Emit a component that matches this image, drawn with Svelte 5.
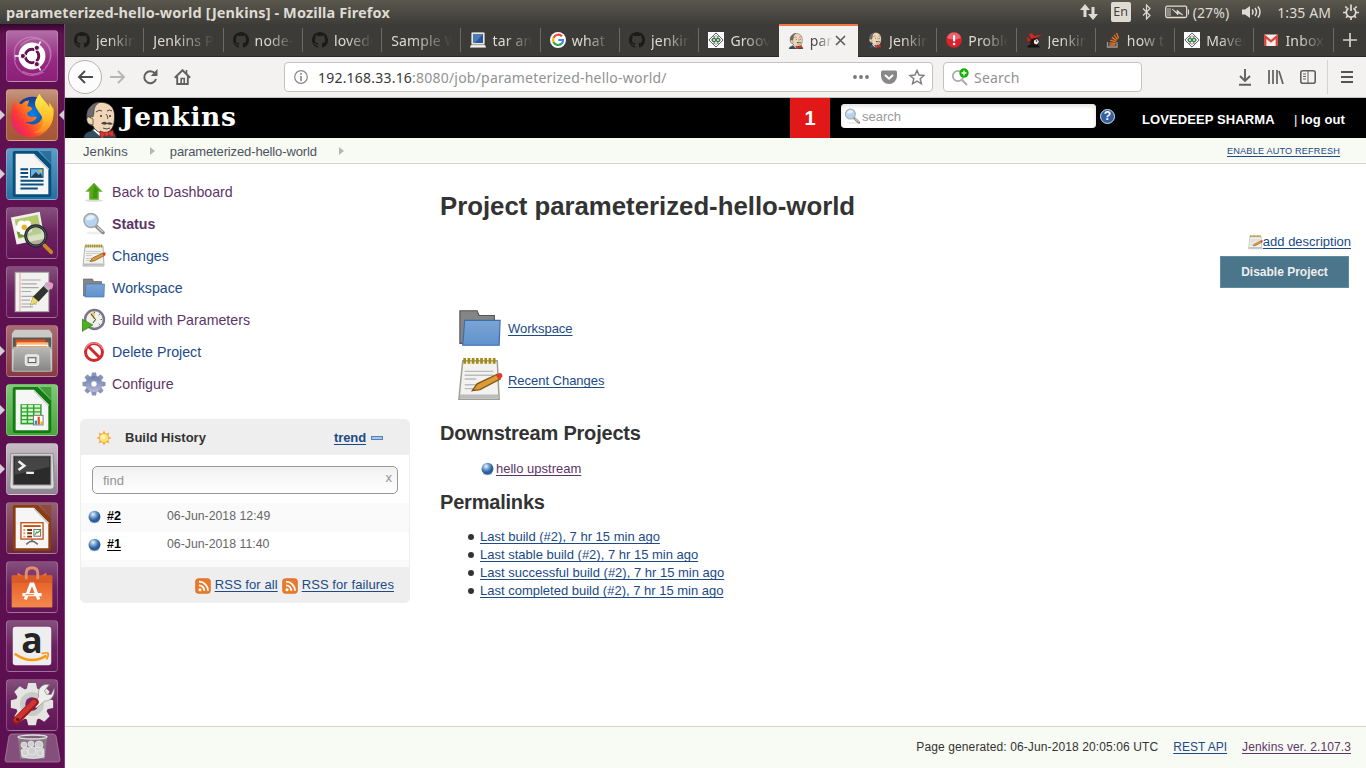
<script>
  const tabs = [
    { icon: 'github', text: 'jenkins' },
    { icon: '', text: 'Jenkins Pi' },
    { icon: 'github', text: 'node-js' },
    { icon: 'github', text: 'lovede' },
    { icon: '', text: 'Sample Wo' },
    { icon: 'screen', text: 'tar and' },
    { icon: 'google', text: 'what is' },
    { icon: 'github', text: 'jenkins' },
    { icon: 'diamond', text: 'Groovy' },
    { icon: 'butler', text: 'para', active: true },
    { icon: 'butler', text: 'Jenkins' },
    { icon: 'alert', text: 'Proble' },
    { icon: 'ninja', text: 'Jenkins' },
    { icon: 'stack', text: 'how to' },
    { icon: 'diamond', text: 'Maven' },
    { icon: 'gmail', text: 'Inbox (' }
  ];
  const apps = [
    { id: 'ubuntu' },
    { id: 'firefox', run: true, focus: true },
    { id: 'writer', run: true },
    { id: 'viewer' },
    { id: 'gedit' },
    { id: 'files', run: true },
    { id: 'calc', run: true },
    { id: 'term', run: true },
    { id: 'impress' },
    { id: 'store' },
    { id: 'amazon' },
    { id: 'settings' }
  ];
  const tasks = [
    { icon: 'up', text: 'Back to Dashboard', seen: true },
    { icon: 'search', text: 'Status', seen: true, bold: true },
    { icon: 'notepad', text: 'Changes' },
    { icon: 'folder', text: 'Workspace' },
    { icon: 'clock', text: 'Build with Parameters', seen: true },
    { icon: 'stop', text: 'Delete Project' },
    { icon: 'gear', text: 'Configure', seen: true }
  ];
  const builds = [
    { n: '#2', t: '06-Jun-2018 12:49' },
    { n: '#1', t: '06-Jun-2018 11:40' }
  ];
  const links = ['build', 'stable build', 'successful build', 'completed build'];
  const teeth = [0, 45, 90, 135, 180, 225, 270, 315];
</script>

{#snippet butler()}
  <svg viewBox="0 0 34 37" class="fill">
    <path d="M1 37c0-4 3-6 7-7l3-3h13l3 3c4 1 6 3 6 7z" fill="#335061" stroke="#1b2a33" stroke-width=".6" />
    <path d="M10 29l6-3 8 0 1 6-6 5z" fill="#fff" />
    <path d="M7 24C2 20 3 9 8 5c5-5 15-5 20 0 4 4 4 10 3 17-1 6-5 10-10 10-6 0-9-3-11-7z" fill="#f0d6b7" stroke="#222" stroke-width=".8" />
    <path d="M7 22C2 17 3 9 8 5c3-3 6-4 9-4-5 3-6 6-6 11l-1 4-2-1z" fill="#6d6b6d" stroke="#222" stroke-width=".5" />
    <path d="M6 16c-3-1-3 5 0 7l4 1 0-6z" fill="#f0d6b7" stroke="#222" stroke-width=".6" />
    <path d="M13 11q3-3 6-1M24 10q3-2 5 0M23 13q3 4 1 5M20 27q4 2 7 0" fill="none" stroke="#222" stroke-width=".8" />
    <path d="M18 22.500q3-3 6-.5 3-2 6 1-3 1.500-6 0-3 1.500-6-.5z" fill="#444" />
    <circle cx="18" cy="15" r=".9" fill="#222" /><circle cx="27" cy="15" r=".9" fill="#222" />
    <path d="M17 30l6 2 7-3 1 7-7-2-7 3z" fill="#d33833" stroke="#701c1a" stroke-width=".7" />
    <rect x="22" y="31" width="3.5" height="4" fill="#ef3d3a" stroke="#701c1a" stroke-width=".5" />
  </svg>
{/snippet}

{#snippet favicon(id)}
  {#if id === 'butler'}
    {@render butler()}
  {:else}
    <svg viewBox="0 0 16 16" class="fill">
      {#if id === 'github'}
        <path fill="#1c1b1a" d="M8 0C3.58 0 0 3.58 0 8c0 3.54 2.29 6.53 5.47 7.59.4.07.55-.17.55-.38v-1.49c-2.01.37-2.53-.49-2.69-.94-.09-.23-.48-.94-.82-1.13-.28-.15-.68-.52-.01-.53.63-.01 1.08.58 1.23.82.72 1.21 1.87.87 2.33.66.07-.52.28-.87.51-1.07-1.78-.2-3.64-.89-3.64-3.95 0-.87.31-1.59.82-2.15-.08-.2-.36-1.02.08-2.12 0 0 .67-.21 2.2.82a7.6 7.6 0 0 1 4 0c1.53-1.04 2.2-.82 2.2-.82.44 1.1.16 1.92.08 2.12.51.56.82 1.27.82 2.15 0 3.07-1.87 3.75-3.65 3.95.29.25.54.73.54 1.48v2.2c0 .21.15.46.55.38A8 8 0 0 0 16 8c0-4.42-3.58-8-8-8z" />
      {:else if id === 'screen'}
        <rect x="1.5" y=".5" width="13" height="12" rx="1" fill="#e9e6dc" stroke="#b9b6aa" stroke-width=".6" />
        <rect x="3" y="2" width="10" height="9" fill="#2a5596" /><path d="M3 2h10l-8 9H3z" fill="#4a7bba" />
        <path d="M1 13h14l1 2.5H0z" fill="#f5f4ef" stroke="#aaa" stroke-width=".5" />
      {:else if id === 'google'}
        <circle cx="8" cy="8" r="8" fill="#fff" />
        <path d="M12 4.4A5 5 0 0 0 3.6 5.8" fill="none" stroke="#ea4335" stroke-width="2.2" />
        <path d="M3.6 5.6a5 5 0 0 0 0 4.6" fill="none" stroke="#fbbc05" stroke-width="2.2" />
        <path d="M3.5 10a5 5 0 0 0 8 1.6" fill="none" stroke="#34a853" stroke-width="2.2" />
        <path d="M11.5 11.8A5 5 0 0 0 13 8H8.3" fill="none" stroke="#4285f4" stroke-width="2.1" />
      {:else if id === 'diamond'}
        <rect width="16" height="16" fill="#fff" />
        <path d="M8 .9L15.1 8 8 15.1.9 8z" fill="#fff" stroke="#444" stroke-width=".9" />
        <path d="M8 3.2L12.8 8 8 12.8 3.2 8z" fill="#dfe9df" stroke="#777" stroke-width=".5" />
        <circle cx="6" cy="8" r="1.7" fill="none" stroke="#397a49" stroke-width="1.2" /><circle cx="10" cy="8" r="1.7" fill="none" stroke="#397a49" stroke-width="1.2" />
        <path d="M5.500 4.500l1.500.8M10.500 4.500l-1.500.8M5.500 11.500l1.500-.8M10.500 11.500l-1.500-.8" stroke="#333" stroke-width=".8" />
      {:else if id === 'alert'}
        <circle cx="8" cy="8" r="7.8" fill="#d8232e" /><path d="M1 6a7.2 7.2 0 0 1 14 0q-7 3-14 0z" fill="#e9636a" />
        <rect x="7" y="3" width="2.2" height="6.5" rx="1" fill="#fff" /><circle cx="8.1" cy="12" r="1.3" fill="#fff" />
      {:else if id === 'ninja'}
        <path d="M1 15.500c1-2 3-3.500 5-3.500l6 1 2 2.500z" fill="#151312" />
        <path d="M4 6l5-2 4 4-1 5-5 1-4-4z" fill="#2a1512" />
        <path d="M3 2l3-1 2 3 8-1.500-5 3L5 7z" fill="#cc2b24" />
        <path d="M1 5l4 2-1 3-3-1z" fill="#b5261f" />
        <path d="M8 8.500l3-1.500 2 2.500-2 3-3-1z" fill="#f2eeea" /><circle cx="10.500" cy="9" r=".8" fill="#222" />
      {:else if id === 'stack'}
        <path d="M2.5 10v5h9.5v-5" fill="none" stroke="#9d9a96" stroke-width="1.3" />
        <path d="M4.3 13h6M4.5 10.8l6 .7M5.2 8.2l5.6 1.7M6.8 5.4l4.8 3.2M9 2.9l3.6 4.5M11.6 1l2 5.3" stroke="#e87423" stroke-width="1.3" />
      {:else if id === 'gmail'}
        <rect x="1" y="2.5" width="14" height="11.5" rx="1" fill="#f1eeec" />
        <path d="M2.2 14V4.4L8 9.3l5.8-4.9V14" fill="none" stroke="#db4437" stroke-width="2.3" />
      {/if}
    </svg>
  {/if}
{/snippet}

{#snippet app(id)}
  <svg viewBox="0 0 52 52" class="fill">
    {#if id === 'ubuntu'}
      <g fill="none" stroke="#d99bc9" stroke-opacity=".55" stroke-width="1.2">
        <path d="M9 30C3 12 20 3 34 8S49 28 40 38M14 15C30 0 47 12 45 27S30 49 16 42M38 43C20 52 5 40 8 22" />
      </g>
      <circle cx="26" cy="26" r="14" fill="#fff" />
      <circle cx="26" cy="26" r="7" fill="none" stroke="#65144f" stroke-width="3.2" />
      <path d="M26 26L35 11M26 26L35 41M26 26H8" stroke="#fff" stroke-width="1.6" />
      <circle cx="26" cy="26" r="5.5" fill="#fff" />
      <g fill="#65144f" stroke="#fff" stroke-width="1"><circle cx="16.5" cy="26" r="2.7" /><circle cx="31" cy="17.5" r="2.7" /><circle cx="31" cy="34.5" r="2.7" /></g>
    {:else if id === 'firefox'}
      <circle cx="26.500" cy="25" r="18" fill="url(#ffBlue)" />
      <path d="M10 8l-2 6c3-1 6 0 7 1 3-3 5-4 8-4l-2 6c3 0 5 1 5 3-1 2-5 2-5 5 2 5 7 2 10 3-2 5-8 6-12 5 8 6 17 2 18-7l11-8c3 14-7 31-22 31C10 49 2 36 5 22c0-5 2-11 5-14z" fill="url(#ffOrange)" />
      <path d="M34 4c-4 5-6 9-4 14 3 6 9 10 7 17-1 5-5 8-10 9 13 3 21-7 21-18 0-6-1-9-4-13l0 5c-3-6-8-8-10-14z" fill="url(#ffTail)" />
    {:else if id === 'writer' || id === 'calc' || id === 'impress'}
      {@const col = id === 'writer' ? '#07507d' : id === 'calc' ? '#147b13' : '#8c3d10'}
      <path d="M8 2h24l14 14v31q0 3-3 3H9q-3 0-3-3V4q0-2 2-2z" fill={col} />
      <path d="M34 2h12v13z" fill={col} opacity=".55" />
      <path d="M9 5h19l15 15v27H9z" fill="#f6f6f6" /><path d="M28 5v2l15 15v-2z" fill="#c6cbd0" />
      {#if id === 'writer'}
        <path d="M14 21h8M14 25h8M14 29h8M14 33h24M14 37h24M14 41h18" stroke="#08507f" stroke-width="2" />
        <rect x="24.500" y="20.500" width="13" height="9" fill="#68b5e4" stroke="#084c78" /><path d="M25 29l5-5 3 3 2-2 2 4z" fill="#2b3b49" /><circle cx="35" cy="23" r="1.5" fill="#f2b52f" />
      {:else if id === 'calc'}
        <rect x="14" y="20" width="22" height="21" fill="#2fa02c" /><path d="M15.500 22h5M22 22h5M28.500 22h6M15.500 26h5M22 26h5M28.500 26h6M15.500 30h5M22 30h5M28.500 30h6M15.500 34h5M22 34h5M15.500 38h5M22 38h5" stroke="#d5f5cd" stroke-width="2.6" />
        <rect x="27.500" y="31.500" width="10" height="10" fill="#fff" stroke="#777" /><path d="M30 41v-4" stroke="#1795e6" stroke-width="2.4" /><path d="M33 41v-8" stroke="#e05a17" stroke-width="2.400" /><path d="M36 41v-3" stroke="#e8b20c" stroke-width="2.400" />
      {:else}
        <rect x="14.500" y="20.500" width="23" height="17" fill="#fff" stroke="#c25017" stroke-width="1.4" />
        <path d="M17 24h18" stroke="#c25017" stroke-width="2" /><path d="M17 28h2M17 31.500h2M17 35h2" stroke="#e99562" stroke-width="2" /><path d="M21 28h5M21 31.500h5M21 35h5" stroke="#7d3410" stroke-width="2" />
        <rect x="28" y="27.500" width="7" height="7" fill="#fff" stroke="#666" /><path d="M29 33l2-3 1 1 3-3" fill="none" stroke="#34a821" stroke-width="1.200" /><path d="M26 38v2m-6 3l4-3h4l4 3" fill="none" stroke="#666" stroke-width="1.600" />
      {/if}
    {:else if id === 'viewer'}
      <path d="M4 10l30-6 5 28-29 6z" fill="#f0efe9" /><path d="M8 12l24-5 4 20-24 5z" fill="#b5c96a" /><path d="M10 24l25-5 1 7-24 5z" fill="#6e9a35" />
      <g fill="#fff"><circle cx="15" cy="17" r="4" /><circle cx="21" cy="17" r="4" /><circle cx="13" cy="21" r="4" /><circle cx="17" cy="24" r="4" /><circle cx="22" cy="22" r="4" /></g><circle cx="18" cy="20" r="2.800" fill="#e7b61f" />
      <circle cx="30" cy="29" r="10.500" fill="#d0dcb6" fill-opacity=".75" stroke="#20242a" stroke-width="3" /><circle cx="30" cy="29" r="10.500" fill="none" stroke="#7b8386" stroke-width=".6" />
      <path d="M39 39l7 7" stroke="#c98724" stroke-width="4" stroke-linecap="round" />
    {:else if id === 'gedit'}
      <rect x="8.500" y="5.500" width="35" height="41" fill="#f1f1ef" stroke="#a5a5a1" /><path d="M13.500 6v40" stroke="#e7a0a0" /><path d="M15 13.500h20M15 17.500h16M15 21.500h18M15 25.500h10M15 30.500h14M15 34.500h9M15 38.500h16M15 41.500h12" stroke="#aaa" stroke-width="1.200" />
      <path d="M24 40l3-9L40 18l5 5-12 13z" fill="#31332f" /><path d="M24 40l3-9 6 5z" fill="#e9d86c" /><path d="M38 20l4-4 5 5-4 4z" fill="#bdbdbd" /><path d="M41 17q3-1 6 1 0 3-1 4z" fill="#e29ac6" stroke="#e29ac6" stroke-width="2" />
    {:else if id === 'files'}
      <path d="M8 4h36l3 4v39H5V8z" fill="#c9c9c6" /><path d="M6 12h40v12H6z" fill="#585854" /><path d="M9 14h31v7H9z" fill="#d94f1f" /><path d="M10 17h33v4H10z" fill="#f6b674" /><path d="M10 19.500h33v3H10z" fill="#fff" /><path d="M11 21h31v3H11z" fill="#e8772c" />
      <path d="M7 22h38l1 25H6z" fill="url(#grey)" stroke="#d0d0ce" stroke-width=".7" /><rect x="19" y="30" width="14" height="11" rx="2" fill="#ddd" stroke="#f8f8f8" /><rect x="22" y="33" width="8" height="5" fill="#eee" stroke="#555" />
    {:else if id === 'term'}
      <path d="M4 10h44l1 34q0 3-3 3H6q-3 0-3-3z" fill="#ddd" stroke="#8a858a" /><rect x="6.500" y="12.500" width="39" height="30" fill="#2b2b2b" stroke="#777" /><path d="M8 14h36v10L8 32z" fill="#454545" />
      <path d="M12 18l6 4.500-6 4.500" fill="none" stroke="#f0f0f0" stroke-width="2.600" /><path d="M20 30h8" stroke="#f0f0f0" stroke-width="2.400" />
    {:else if id === 'store'}
      <path d="M5 14h6V11l5 3h20l5-3v3h6v33H5z" fill="#ee7335" /><path d="M5 14h42v8H5z" fill="#d95b28" /><path d="M5 22h42v25H5z" fill="url(#orange)" />
      <path d="M20 18v-6q0-6 6-6t6 6v6" fill="none" stroke="#e58c6c" stroke-width="3" /><path d="M19 39l6-16h2l6 16M16 34h20" fill="none" stroke="#fff" stroke-width="3.300" /><path d="M19 34h9" stroke="#ee7335" stroke-width="1" />
    {:else if id === 'amazon'}
      <rect x="6" y="6" width="40" height="40" rx="3" fill="#eee" />
      <text x="26" y="33" text-anchor="middle" font-family="Open Sans" font-weight="700" font-size="37" fill="#242424">a</text>
      <path d="M8 34q17 12 33 2" fill="none" stroke="#f79a12" stroke-width="2.500" /><path d="M36 34q6-2 7 0 0 3-2 6" fill="none" stroke="#f79a12" stroke-width="1.800" />
    {:else if id === 'settings'}
      <g fill="#e4e4e2"><circle cx="26" cy="25" r="17" />{#each teeth as a}<path d="M22 3h8l2 9H20z" transform="rotate({a} 26 25)" />{/each}</g>
      <circle cx="26" cy="25" r="12.500" fill="#cacac8" /><circle cx="26" cy="25" r="7" fill="#77246a" />
      <path d="M28 27l5-10C31 9 37 3 44 5l-5 6 2 4 5 0 3-6c1 8-4 13-10 13l-8 7z" fill="#eeeeec" stroke="#8c8c8c" stroke-width=".7" />
      <path d="M10 42L29 23" stroke="#9e1a1a" stroke-width="8" stroke-linecap="round" /><path d="M10 41L28 23" stroke="#cf3530" stroke-width="5" stroke-linecap="round" />
      <circle cx="11" cy="41" r="1.700" fill="#5d1717" />
    {/if}
  </svg>
{/snippet}

{#snippet icon(id)}
  <svg viewBox="0 0 24 24" class="fill">
    {#if id === 'up'}
      <ellipse cx="12" cy="20.500" rx="9" ry="1.500" fill="#ddd" /><path d="M12 3l8 8.500h-3.500v8h-9v-8H4z" fill="#57a81e" stroke="#7dbb50" stroke-width=".8" /><path d="M12 5l5 6h-2v7h-4z" fill="#3f9705" />
    {:else if id === 'search'}
      <ellipse cx="13" cy="21" rx="9" ry="1.500" fill="#eee" /><path d="M14 14l7 6.500" stroke="#888" stroke-width="3.600" stroke-linecap="round" /><path d="M15 14.500l6 5.500" stroke="#ccc" stroke-width="1.500" />
      <circle cx="9" cy="8.500" r="7" fill="#b7d3f2" stroke="#a5a8a5" stroke-width="1.500" /><path d="M4 8a5 5 0 0 1 9-3q-3 4-9 3z" fill="#e3effb" />
    {:else if id === 'notepad'}
      <path d="M3 2h18l1 20H1z" fill="#f2f2f0" stroke="#a0a09a" stroke-width=".8" /><path d="M1.500 20.500h20" stroke="#bbb" stroke-width="2" /><path d="M4 .5v3M6.200 .5v3M8.400 .5v3M10.600 .5v3M12.800 .5v3M15 .5v3M17.200 .5v3M19.400 .5v3" stroke="#a38a12" stroke-width="1.400" />
      <path d="M4 7.500h15M4 9.500h15M4 11.500h6M4 14.500h8M4 16.500h5" stroke="#bbb" stroke-width=".7" />
      <path d="M8 17.500l2.500-3.500L21 9l1.500 2.500L12 17z" fill="#dd9b35" stroke="#7e5515" stroke-width=".7" /><path d="M20.300 9.300l2-1q1.500 0 1.400 2L21.800 12z" fill="#dc3a2c" />
    {:else if id === 'folder'}
      <path d="M1.500 3h9l1 2.500h8V20h-18z" fill="#858585" stroke="#555" stroke-width=".6" /><path d="M4 8h18.500L22 21H3z" fill="url(#folder)" stroke="#3a6eb0" stroke-width=".6" />
    {:else if id === 'clock'}
      <circle cx="12.500" cy="11.500" r="9.500" fill="#f1f1e9" stroke="#75768a" stroke-width="2.400" /><path d="M12 12L8 5l5-1z" fill="#e8c85b" /><path d="M9 6l4.500 5.500L11 15" fill="none" stroke="#333" /><path d="M12.500 3.500v1.500M20 11.500h-1.500M17.800 6.200l-1 1M17.800 16.800l-1-1" stroke="#666" /><path d="M0 11l11 6-11 6.500z" fill="#4fae24" stroke="#2f7d12" stroke-width=".6" />
    {:else if id === 'stop'}
      <circle cx="12" cy="12" r="8.500" fill="#fff" stroke="#d2292f" stroke-width="3" /><path d="M6 6l12 12" stroke="#d2292f" stroke-width="3" /><path d="M3.500 9a9 9 0 0 1 17 0" fill="none" stroke="#ec7f80" stroke-width="1.500" />
    {:else if id === 'gear'}
      <g>{#each teeth as a}<path d="M10 .5h4l1 5H9z" fill="#8a94bb" transform="rotate({a} 12 12)" />{/each}</g><circle cx="12" cy="12" r="8" fill="url(#gear)" /><circle cx="12" cy="12" r="3.200" fill="#fff" stroke="#7d83a8" stroke-width=".7" />
    {:else if id === 'ball'}
      <ellipse cx="12" cy="21" rx="9" ry="2.500" fill="#d5d5d5" /><circle cx="12" cy="11.500" r="11" fill="url(#ball)" />
    {:else if id === 'rss'}
      <rect x="1" y="1" width="22" height="22" rx="4" fill="#ec7a2b" stroke="#d05e1a" /><path d="M6 11a8 8 0 0 1 8 8M6 5.500A13.500 13.500 0 0 1 19.500 19" fill="none" stroke="#fff" stroke-width="2.800" /><circle cx="7.500" cy="17.500" r="2.300" fill="#fff" />
    {:else if id === 'sun'}
      {#each teeth as a}<path d="M12 .5l2 5h-4z" fill="#f3a232" transform="rotate({a} 12 12)" />{/each}<circle cx="12" cy="12" r="7" fill="#fde36f" stroke="#f0a437" stroke-width="1.200" /><circle cx="10.500" cy="10.500" r="3.500" fill="#fff5b5" />
    {/if}
  </svg>
{/snippet}

<svg width="0" height="0" class="defs">
  <defs>
    <radialGradient id="ffBlue"><stop offset="0" stop-color="#0a84e8" /><stop offset="1" stop-color="#143b91" /></radialGradient>
    <linearGradient id="ffOrange" x1="1" x2="0" y1=".2" y2=".9"><stop offset="0" stop-color="#ffd42e" /><stop offset=".4" stop-color="#ff8a18" /><stop offset=".7" stop-color="#fc3838" /><stop offset="1" stop-color="#e0158d" /></linearGradient>
    <linearGradient id="ffTail" x2="0" y2="1"><stop offset="0" stop-color="#fff04a" /><stop offset=".6" stop-color="#ffc02e" /><stop offset="1" stop-color="#ff8420" /></linearGradient>
    <linearGradient id="grey" x2="0" y2="1"><stop offset="0" stop-color="#b9b9b7" /><stop offset="1" stop-color="#858583" /></linearGradient>
    <linearGradient id="orange" x2="0" y2="1"><stop offset="0" stop-color="#e8652b" /><stop offset="1" stop-color="#f4894d" /></linearGradient>
    <linearGradient id="folder" x2="0" y2="1"><stop offset="0" stop-color="#7ca4d5" /><stop offset="1" stop-color="#5f92cc" /></linearGradient>
    <linearGradient id="gear" x2="0" y2="1"><stop offset="0" stop-color="#6a7da8" /><stop offset="1" stop-color="#b9b7d8" /></linearGradient>
    <radialGradient id="ball" cx=".38" cy=".3"><stop offset="0" stop-color="#eef5fb" /><stop offset=".5" stop-color="#7ba5d2" /><stop offset="1" stop-color="#2a5e9e" /></radialGradient>
  </defs>
</svg>

<div class="desktop">
  <header class="panel">
    <span class="title">parameterized-hello-world [Jenkins] - Mozilla Firefox</span>
    <div class="tray">
      <svg class="net" width="18" height="16"><path d="M5 13V5M13 3v8" stroke="#dfdbd2" stroke-width="3" /><path d="M0 6l5-6 5 6zM8 10l5 6 5-6z" fill="#dfdbd2" /></svg>
      <span class="lang">En</span>
      <svg class="bt" width="10" height="16"><path d="M1 4.500l7 7-3.500 3.500V1L8 4.500l-7 7" fill="none" stroke="#dfdbd2" stroke-width="1.200" /></svg>
      <svg class="bat" width="25" height="14"><rect x=".7" y="1.200" width="21" height="11.300" rx="1.500" fill="none" stroke="#dfdbd2" stroke-width="1.300" /><rect x="2" y="3" width="4" height="8" fill="#8b8880" /><path d="M23 4.500h1v5h-1z" fill="#dfdbd2" /><path d="M7 4l5 3.500V5L18 10l-5-2v2z" fill="#dfdbd2" stroke="#dfdbd2" stroke-width=".6" /></svg>
      <span class="pct">(27%)</span>
      <svg class="vol" width="20" height="16"><path d="M0 5.500h3L8 2v12L3 10.500H0z" fill="#dfdbd2" /><path d="M10 5.500q2 2.500 0 5M13 4q3 4 0 8M16 2.500q4 5.500 0 11" fill="none" stroke="#dfdbd2" stroke-width="1.500" /></svg>
      <span class="time">1:35 AM</span>
      <svg class="cog" width="16" height="16" viewBox="0 0 16 16"><path d="M5.500 4.300a4.800 4.800 0 1 0 5 0M8 .5v6.500" fill="none" stroke="#dfdbd2" stroke-width="1.700" /><path d="M4 4.200L2.300 2.500M12 4.200l1.700-1.700M3.500 8.500H0M16 8.500h-3.500M4.800 11.700l-1.800 2M11.200 11.700l1.800 2M8 13v3" stroke="#dfdbd2" stroke-width="1.700" /></svg>
    </div>
  </header>

  <div class="screen">
    <nav class="launcher">
      {#each apps as a}
        <div class="app {a.id}">
          {#if a.run}<i class="run"></i>{/if}
          {@render app(a.id)}
          {#if a.focus}<i class="focus"></i>{/if}
        </div>
      {/each}
      <svg class="trash" width="57" height="30" viewBox="0 0 57 30"><path d="M8 1h41q2 0 3 2l4 24q0 2-2 2H3q-2 0-2-2L5 3q1-2 3-2z" fill="#84507b" stroke="#a87ca1" stroke-width=".8" /><path d="M14 4h29l-2 22H16z" fill="#8e878e" fill-opacity=".7" /><ellipse cx="28.500" cy="4" rx="14.500" ry="2" fill="#776572" stroke="#dedede" stroke-width="1.300" /><g fill="#cfcfcf" stroke="#eee" stroke-width=".7"><circle cx="20" cy="12" r="3" /><circle cx="27" cy="11" r="3" /><circle cx="35" cy="12" r="4" /><path d="M17 17l5-3 6 2 6-2 6 2v8q-11 3-22 0z" /><circle cx="21" cy="20" r="3" /><circle cx="28" cy="18" r="4" /><circle cx="36" cy="20" r="3" /></g></svg>
    </nav>

    <div class="browser">
      <div class="tabs">
        {#each tabs as t}
          <div class="tab" class:active={t.active}>
            {#if t.icon}<span class="fav">{@render favicon(t.icon)}</span>{/if}
            <span class="label">{t.text}</span>
            {#if t.active}<svg class="close" width="11" height="11"><path d="M1 1l9 9M10 1l-9 9" stroke="#5b5b5b" stroke-width="1.600" /></svg>{/if}
          </div>
        {/each}
        <svg class="plus" width="14" height="14"><path d="M7 0v14M0 7h14" stroke="#d6d3cb" stroke-width="1.700" /></svg>
      </div>

      <div class="toolbar">
        <div class="back"><svg width="16" height="14"><path d="M8 1L2 7l6 6M2 7h14" fill="none" stroke="#4b4b4b" stroke-width="1.900" /></svg></div>
        <svg class="fwd" width="16" height="14"><path d="M8 1l6 6-6 6M14 7H0" fill="none" stroke="#b7b6b5" stroke-width="1.900" /></svg>
        <svg class="reload" width="16" height="16"><path d="M13 4.500A6 6 0 1 0 14 10" fill="none" stroke="#606060" stroke-width="2" /><path d="M15.500 0v7H8.700z" fill="#606060" /></svg>
        <svg class="home" width="17" height="16"><path d="M.8 8.700L8.500 1.200l7.700 7.500M3.200 7.500V15h10.600V7.500" fill="none" stroke="#606060" stroke-width="1.900" /><path d="M7.200 14V9.500h3V14M12.500 1v4" fill="none" stroke="#606060" stroke-width="1.600" /></svg>
        <div class="url">
          <svg width="14" height="14"><circle cx="7" cy="7" r="6.300" fill="none" stroke="#888" stroke-width="1.200" /><path d="M7 3v1.800M7 6v5" stroke="#888" stroke-width="1.600" /></svg>
          <span class="addr"><b>192.168.33.16</b>:8080/job/parameterized-hello-world/</span>
          <svg width="72" height="17"><g fill="#777"><circle cx="2" cy="8" r="1.900" /><circle cx="8" cy="8" r="1.900" /><circle cx="14" cy="8" r="1.900" /></g><path d="M29.500 1.500h13q1.500 0 1.500 2V7a8 8 0 0 1-16 0V3.500q0-2 1.500-2z" fill="#888" /><path d="M32 6l4 3.700L40 6" fill="none" stroke="#fff" stroke-width="2" /><path d="M64 1.500l2 4.500 5 .5-3.800 3.300 1.200 5-4.400-2.600-4.400 2.600 1.200-5L57 6.500l5-.5z" fill="none" stroke="#808080" stroke-width="1.500" /></svg>
        </div>
        <div class="find">
          <svg width="18" height="18"><circle cx="7" cy="8" r="5.200" fill="none" stroke="#aaa" stroke-width="1.700" /><path d="M11 12l5 5" stroke="#aaa" stroke-width="2" /><circle cx="13" cy="5" r="4.700" fill="#12b300" /><path d="M13 2.500v5M10.500 5h5" stroke="#fff" stroke-width="1.300" /></svg>
          <span>Search</span>
        </div>
        <div class="tools">
          <svg width="14" height="17"><path d="M7 0v12M2 7l5 5 5-5M1 15.700h12" fill="none" stroke="#606060" stroke-width="1.900" /></svg>
          <svg width="16" height="14"><path d="M1 0v14M5 0v14M9 0v14M11 1l4 13" stroke="#606060" stroke-width="1.700" /></svg>
          <svg width="16" height="14"><rect x=".8" y=".8" width="14.400" height="12.400" rx="2" fill="none" stroke="#606060" stroke-width="1.600" /><path d="M8 1v12M3 4h3M3 6.500h3M3 9h3" stroke="#606060" /></svg>
        </div>
        <div class="menu"><svg width="12" height="12"><path d="M0 1h12M0 6h12M0 11h12" stroke="#555" stroke-width="1.800" /></svg></div>
      </div>

      <div class="jheader">
        <div class="mascot">{@render butler()}</div>
        <span class="brand">Jenkins</span>
        <span class="notice">1</span>
        <div class="jsearch"><span class="lens">{@render icon('search')}</span>search</div>
        <span class="help">?</span>
        <span class="user">LOVEDEEP SHARMA</span>
        <span class="logout"><i>|</i> log out</span>
      </div>

      <div class="crumbs">
        <span class="c1">Jenkins</span><i></i><span class="c2">parameterized-hello-world</span><i></i>
        <a class="auto" href="#top">ENABLE AUTO REFRESH</a>
      </div>

      <div class="page">
        <aside>
          <ul class="tasks">
            {#each tasks as t}
              <li class:seen={t.seen} class:bold={t.bold}><span class="ic">{@render icon(t.icon)}</span>{t.text}</li>
            {/each}
          </ul>
          <section class="history">
            <div class="hhead"><span class="sun">{@render icon('sun')}</span><b>Build History</b><a href="#trend">trend</a><i></i></div>
            <div class="filter"><span>find</span><em>x</em></div>
            {#each builds as b}
              <div class="build"><span class="ball">{@render icon('ball')}</span><a href="#build">{b.n}</a><span>{b.t}</span></div>
            {/each}
            <div class="rest"></div>
            <div class="feeds"><span class="rss">{@render icon('rss')}</span><a href="#all">RSS for all</a><span class="rss">{@render icon('rss')}</span><a href="#failed">RSS for failures</a></div>
          </section>
        </aside>
        <main>
          <h1>Project parameterized-hello-world</h1>
          <div class="desc"><span class="pad">{@render icon('notepad')}</span><a href="#desc">add description</a></div>
          <div class="disable"><button>Disable Project</button></div>
          <div class="big ws"><span>{@render icon('folder')}</span><a href="#ws">Workspace</a></div>
          <div class="big"><span>{@render icon('notepad')}</span><a href="#changes">Recent Changes</a></div>
          <h2>Downstream Projects</h2>
          <div class="down"><span class="ball">{@render icon('ball')}</span><a href="#up">hello upstream</a></div>
          <h2 class="perm">Permalinks</h2>
          <ul class="links">
            {#each links as l}<li><a href="#last">Last {l} (#2), 7 hr 15 min ago</a></li>{/each}
          </ul>
        </main>
      </div>
      <footer><span>Page generated: 06-Jun-2018 20:05:06 UTC</span><a class="api" href="#api">REST API</a><a class="ver" href="#ver">Jenkins ver. 2.107.3</a></footer>
    </div>
  </div>
</div>

<style>
  :global(body) { margin: 0; overflow: hidden; }
  .desktop { width: 1366px; height: 768px; display: flex; flex-direction: column; font-family: "Liberation Sans", Arial, sans-serif; font-size: 13px; color: #333; white-space: nowrap; }
  .desktop :global(*) { box-sizing: border-box; }
  .defs { position: absolute; }
  .fill { display: block; width: 100%; height: 100%; }
  svg { flex: none; }
  a { color: #204a87; text-decoration: underline; text-decoration-thickness: 1px; text-underline-offset: 2px; text-decoration-skip-ink: none; }

  .panel { height: 24px; display: flex; justify-content: space-between; align-items: center; padding: 0 7px 0 6px; background: linear-gradient(#5a574d, #3e3d39); color: #dfdbd2; font-family: "Noto Sans", sans-serif; font-size: 14px; }
  .title { font-weight: 700; font-size: 14.500px; line-height: 22px; margin-top: -1px; letter-spacing: .12px; }
  .tray { display: flex; align-items: center; }
  .lang { width: 20px; height: 20px; margin: 0 11px 0 13px; border-radius: 2px; background: #dfdbd2; color: #45433e; font-size: 12.5px; line-height: 20px; text-align: center; }
  .bat { margin: 0 3px 0 13px; }
  .vol { margin: 0 15px 0 13px; }
  .pct { letter-spacing: .1px; }
  .time { letter-spacing: .1px; }
  .cog { margin-left: 12px; }

  .screen { flex: 1; display: flex; min-height: 0; }
  .launcher { width: 65px; display: flex; flex-direction: column; gap: 7px; padding: 6px 0 0 6px; background: linear-gradient(#35072e, #5f1152 10px, #5c0f50); border-right: 1px solid #80427a; }
  .app { position: relative; width: 52px; height: 52px; flex: none; border-radius: 4px; border: 1px solid rgba(255,255,255,.22); background: linear-gradient(#84507c, #6b2260 50%, #621556); }
  .app.ubuntu { background: linear-gradient(#b26ea7, #962c83 55%, #8d1e79); }
  .app.firefox { background: linear-gradient(#c4977e, #ac5f3f 50%, #a75738); }
  .app.writer { background: linear-gradient(#5e9cc6, #286f9f); }
  .app.files { background: linear-gradient(#a86c75, #873a44); }
  .app.calc { background: linear-gradient(#80c878, #48a53c); }
  .app.term { background: linear-gradient(#c8bcc6, #8f818e); }
  .app.impress { background: linear-gradient(#936272, #6c2447); }
  .run, .focus { position: absolute; top: 20px; border: 5px solid transparent; }
  .run { left: -7px; border-left-color: #d5cdd5; border-right: 0; }
  .focus { right: -7px; border-right-color: #d5cdd5; border-left: 0; }
  .trash { margin: -5px 0 0 -2px; }

  .browser { flex: 1; display: flex; flex-direction: column; min-width: 0; background: #fff; }
  .tabs { height: 33px; display: flex; align-items: center; background: #3c3b37; border-bottom: 1px solid #2a2926; font-family: "Noto Sans", sans-serif; font-size: 14px; color: #dedbd3; }
  .tab { width: 79.300px; height: 24px; flex: none; display: flex; align-items: center; padding: 0 8px 0 9px; border-right: 1px solid #6c6a66; }
  .tab:nth-child(9) { border-color: transparent; }
  .fav { width: 16px; height: 16px; flex: none; margin-right: 6px; }
  .label { flex: 1; overflow: hidden; letter-spacing: .15px; mask-image: linear-gradient(90deg, #000 35%, transparent 100%); }
  .tab.active { height: 33px; border: 0; border-top: 2px solid #f07746; padding-bottom: 2px; background: #f3f2f1; color: #4c4c4c; margin-bottom: -1px; }
  .close { margin: 0 4px 0 2px; }
  .plus { margin-left: 9px; }

  .toolbar { height: 41px; display: flex; align-items: center; padding-left: 3px; background: #f3f2f1; border-bottom: 1px solid #c1c0be; font-family: "Noto Sans", sans-serif; font-size: 14px; color: #929292; }
  .back { width: 34px; height: 34px; display: grid; place-items: center; border: 1px solid #b2b2b0; border-radius: 50%; background: #fcfcfc; }
  .fwd { margin-left: 8px; }
  .reload { margin-left: 16px; }
  .home { margin-left: 16px; }
  .url { width: 649px; height: 30px; margin-left: 93px; padding: 0 7px 0 9px; display: flex; align-items: center; border: 1px solid #c3c2c0; border-radius: 4px; background: #fff; }
  .addr { flex: 1; margin-left: 10px; letter-spacing: .21px; }
  .addr b { font-weight: 400; color: #383838; }
  .find { width: 199px; height: 30px; margin-left: 10px; padding-left: 7px; display: flex; align-items: center; gap: 5px; border: 1px solid #c3c2c0; border-radius: 4px; background: #fff; letter-spacing: .2px; }
  .tools { flex: 1; display: flex; justify-content: flex-end; align-items: center; gap: 16px; padding-right: 11px; }
  .menu { width: 39px; height: 34px; display: grid; place-items: center; border-left: 1px solid #d3d2d0; }

  .jheader { height: 40px; display: flex; align-items: center; background: #000; color: #fff; font-weight: 700; }
  .mascot { width: 34px; height: 37px; margin: 3px 0 0 18px; }
  .brand { width: 669px; margin: -3px 0 0 4px; font: 700 26.500px/34px "DejaVu Serif", serif; letter-spacing: .6px; }
  .notice { width: 40px; height: 40px; background: #e21717; font-size: 20px; line-height: 40px; text-align: center; }
  .jsearch { width: 255px; height: 24px; margin: -4px 0 0 11px; padding-left: 3px; display: flex; align-items: center; gap: 1px; border-radius: 4px; background: #fff; box-shadow: inset 0 2px 4px #ddd; color: #999; font-weight: 400; }
  .lens { width: 17px; height: 17px; }
  .help { width: 15px; height: 15px; margin: -3px 0 0 4px; border: 1px solid #d7e2f2; border-radius: 50%; background: #355f9e; font-size: 12px; line-height: 13px; text-align: center; }
  .user { margin: 3px 0 0 27px; width: 152px; letter-spacing: .1px; }
  .logout { margin-top: 3px; letter-spacing: .05px; }
  .logout i { font-style: normal; font-weight: 400; }

  .crumbs { height: 26px; display: flex; align-items: center; padding: 1px 26px 0 18px; background: #f8faf4; border-bottom: 1px solid #d3d7cf; color: #4d545d; }
  .crumbs i { border: 4px solid transparent; border-left: 5px solid #b6b6b6; border-right: 0; margin: 0 15px 0 22px; }
  .c1 { letter-spacing: .1px; }
  .c2 { letter-spacing: -.13px; }
  .auto { margin-left: auto; font-size: 9.200px; letter-spacing: .15px; }

  .page { flex: 1; display: flex; min-height: 0; }
  aside { width: 345px; flex: none; padding: 12px 0 0 15px; }
  ul { margin: 0; padding: 0; list-style: none; }
  .tasks li { height: 32px; display: flex; align-items: center; padding-left: 2px; font-size: 14.200px; color: #204a87; }
  .tasks .seen { color: #5c3566; }
  .tasks .bold { font-weight: 700; }
  .ic { width: 24px; height: 24px; margin-right: 6px; }
  .history { height: 184px; margin-top: 19px; display: flex; flex-direction: column; border: 1px solid #eee; border-radius: 5px; overflow: hidden; }
  .hhead { height: 35px; display: flex; align-items: center; padding-left: 15px; background: #eee; }
  .sun { width: 16px; height: 16px; margin-right: 13px; }
  .hhead b { width: 209px; }
  .hhead a { font-weight: 700; letter-spacing: -.1px; }
  .hhead i { width: 12px; height: 4px; margin-left: 5px; border: 1px solid #5383bd; background: #a8c4e5; }
  .filter { height: 28px; margin: 11px; margin-bottom: 9px; flex: none; display: flex; justify-content: space-between; padding: 5px 5px 0 10px; border: 1px solid #999; border-radius: 5px; background: linear-gradient(#f1f1f1, #fff); color: #929292; line-height: 17px; }
  .filter em { font-style: normal; line-height: 12px; }
  .build { height: 28.500px; flex: none; display: flex; align-items: center; padding: 0 0 3px 7px; font-size: 12.300px; color: #666; }
  .build:nth-of-type(3) { background: #fafafa; }
  .ball { width: 13px; height: 14px; }
  .build .ball { margin: 2px 6px 0 0; }
  .build a { width: 60px; font-weight: 700; color: #000; font-size: 12.500px; }
  .rest { flex: 1; background: #fafafa; }
  .feeds { height: 35px; flex: none; display: flex; align-items: center; justify-content: flex-end; padding-right: 15px; background: #eee; letter-spacing: .08px; }
  .rss { width: 16px; height: 16px; margin: 2px 4px 0; }
  main { flex: 1; padding: 26px 15px 0 30px; }
  h1 { margin: 0; font-size: 25.800px; line-height: 32px; letter-spacing: -.02px; }
  h2 { margin: 15px 0 0; font-size: 20px; line-height: 24px; letter-spacing: -.2px; }
  .desc { display: flex; justify-content: flex-end; align-items: center; height: 20px; margin-top: 9px; }
  .pad { width: 15px; height: 15px; margin-top: 2px; }
  .disable { display: flex; justify-content: flex-end; padding-right: 2px; margin-top: 5px; }
  button { width: 129px; height: 32px; padding: 0; border: 1px solid #5a8ba0; background: #4b758b; color: #eee; font: 700 12px "Liberation Sans", sans-serif; }
  .big { height: 52px; display: flex; align-items: center; padding-left: 17px; letter-spacing: -.03px; }
  .big span { width: 46px; height: 46px; margin-right: 5px; }
  .ws { margin-top: 14px; }
  .down { height: 20px; margin-top: 13px; display: flex; align-items: center; padding-left: 41px; }
  .down span { margin: 2px 2px 0 0; }
  .down a { color: #5c3566; }
  .perm { margin-top: 12px; }
  .links { margin-top: 14px; padding-left: 40px; line-height: 18px; }
  .links li { position: relative; }
  .links li::before { content: ""; position: absolute; left: -12px; top: 6px; width: 6px; height: 6px; border-radius: 50%; background: #333; }
  footer { height: 42px; display: flex; justify-content: flex-end; align-items: center; padding: 0 15px 2px 0; background: #f8faf4; border-top: 1px solid #d3d7cf; font-size: 12px; letter-spacing: .11px; }
  .api { margin: 0 15px; letter-spacing: 0; }
  .ver { color: #5c3566; }
</style>
